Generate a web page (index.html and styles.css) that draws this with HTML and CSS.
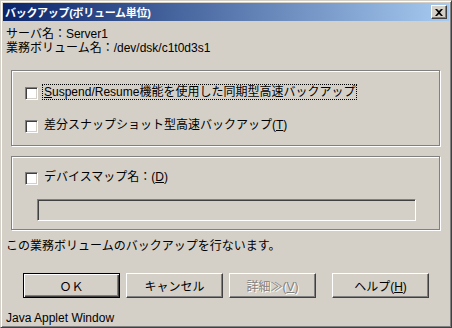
FILE: index.html
```html
<!DOCTYPE html>
<html lang="ja">
<head>
  <meta charset="UTF-8">
  <title>バックアップ(ボリューム単位)</title>
  <link rel="stylesheet" href="styles.css">
</head>
<body>
  <div class="window">
    <div class="titlebar">
      <span class="title">バックアップ(ボリューム単位)</span>
      <button class="close" type="button">
        <svg width="8" height="7" viewBox="0 0 8 7"><path d="M0 0h2l2 2 2-2h2L5 3.5 8 7H6L4 5 2 7H0l3-3.5z" fill="#000"/></svg>
      </button>
    </div>

    <div class="info">
      <div>サーバ名：Server1</div>
      <div>業務ボリューム名：/dev/dsk/c1t0d3s1</div>
    </div>

    <!-- backup type -->
    <div class="group group-backup">
      <label class="check-row">
        <span class="checkbox"></span>
        <span class="label focused"><u>S</u>uspend/Resume機能を使用した同期型高速バックアップ</span>
      </label>
      <label class="check-row">
        <span class="checkbox"></span>
        <span class="label">差分スナップショット型高速バックアップ(<u>T</u>)</span>
      </label>
    </div>

    <!-- device map -->
    <div class="group group-map">
      <label class="check-row">
        <span class="checkbox"></span>
        <span class="label">デバイスマップ名：(<u>D</u>)</span>
      </label>
      <div class="textfield"></div>
    </div>

    <p class="message">この業務ボリュームのバックアップを行ないます。</p>

    <div class="buttons">
      <button type="button" class="btn btn-default">ＯＫ</button>
      <button type="button" class="btn btn-cancel">キャンセル</button>
      <button type="button" class="btn btn-detail" disabled>詳細≫(<u>V</u>)</button>
      <button type="button" class="btn btn-help">ヘルプ(<u>H</u>)</button>
    </div>

    <div class="status">Java Applet Window</div>
  </div>
</body>
</html>
```

FILE: styles.css
```css
body {
  margin: 0;
  font-family: "Liberation Sans", "Noto Sans CJK JP", sans-serif;
  font-size: 12px;
  color: #000;
}

.window {
  width: 452px;
  height: 328px;
  box-sizing: border-box;
  background: #d4d0c8;
  border: 1px solid;
  border-color: #d4d0c8 #404040 #404040 #d4d0c8;
  box-shadow: inset 1px 1px #fff, inset -1px -1px #808080;
  padding: 2px;
  display: flex;
  flex-direction: column;
  align-items: flex-start;
}

.titlebar {
  align-self: stretch;
  height: 18px;
  display: flex;
  align-items: center;
  justify-content: space-between;
  background: linear-gradient(to right, #0a246a, #a6caf0);
  padding: 0 2px;
}

.title {
  color: #fff;
  font-weight: bold;
  font-size: 11px;
  letter-spacing: -0.3px;
}

.close {
  width: 16px;
  height: 14px;
  padding: 0;
  box-sizing: border-box;
  background: #d4d0c8;
  border: 1px solid;
  border-color: #fff #404040 #404040 #fff;
  box-shadow: inset -1px -1px #808080;
  display: flex;
  align-items: center;
  justify-content: center;
}

.info {
  margin: 6px 0 0 3px;
  line-height: 14px;
}

.group {
  margin-left: 8px;
  width: 429px;
  box-sizing: border-box;
  border: 1px solid #808080;
  box-shadow: inset 1px 1px #fff, 1px 1px #fff;
  display: flex;
  flex-direction: column;
  align-items: flex-start;
}

.group-backup {
  margin-top: 15px;
  padding: 13px 12px 12px 13px;
  gap: 17px;
}

.group-map {
  margin-top: 10px;
  padding: 12px 12px 8px 13px;
}

.check-row {
  display: flex;
  align-items: flex-end;
  height: 16px;
}

.checkbox {
  width: 13px;
  height: 13px;
  box-sizing: border-box;
  background: #fff;
  border: 1px solid;
  border-color: #808080 #fff #fff #808080;
  box-shadow: inset 1px 1px #404040, inset -1px -1px #d4d0c8;
}

.label {
  margin-left: 4px;
  padding: 0 1px;
  line-height: 14px;
  border: 1px dotted transparent;
}

.label.focused {
  border-color: #000;
}

u {
  text-underline-offset: 1px;
}

.textfield {
  margin: 14px 0 0 12px;
  width: 379px;
  height: 22px;
  box-sizing: border-box;
  border: 1px solid;
  border-color: #808080 #fff #fff #808080;
  box-shadow: inset 1px 1px #404040, inset -1px -1px #d4d0c8;
}

.message {
  margin: 9px 0 0 3px;
  line-height: 14px;
}

.buttons {
  display: flex;
  margin: 20px 0 0 20px;
}

.btn {
  height: 25px;
  width: 97px;
  box-sizing: border-box;
  padding: 0;
  font-family: inherit;
  font-size: 12px;
  color: #000;
  background: #d4d0c8;
  border: 1px solid;
  border-color: #fff #404040 #404040 #fff;
  box-shadow: inset -1px -1px #808080;
}

.btn-default {
  border-color: #000;
  box-shadow: inset 1px 1px #fff, inset -1px -1px #404040, inset -2px -2px #808080;
}

.btn-cancel {
  margin-left: 6px;
}

.btn-detail {
  margin-left: 6px;
  width: 87px;
  color: #808080;
  text-shadow: 1px 1px #fff;
}

.btn-help {
  margin-left: 16px;
}

.status {
  margin: 13px 0 0 3px;
  line-height: 14px;
}
```
